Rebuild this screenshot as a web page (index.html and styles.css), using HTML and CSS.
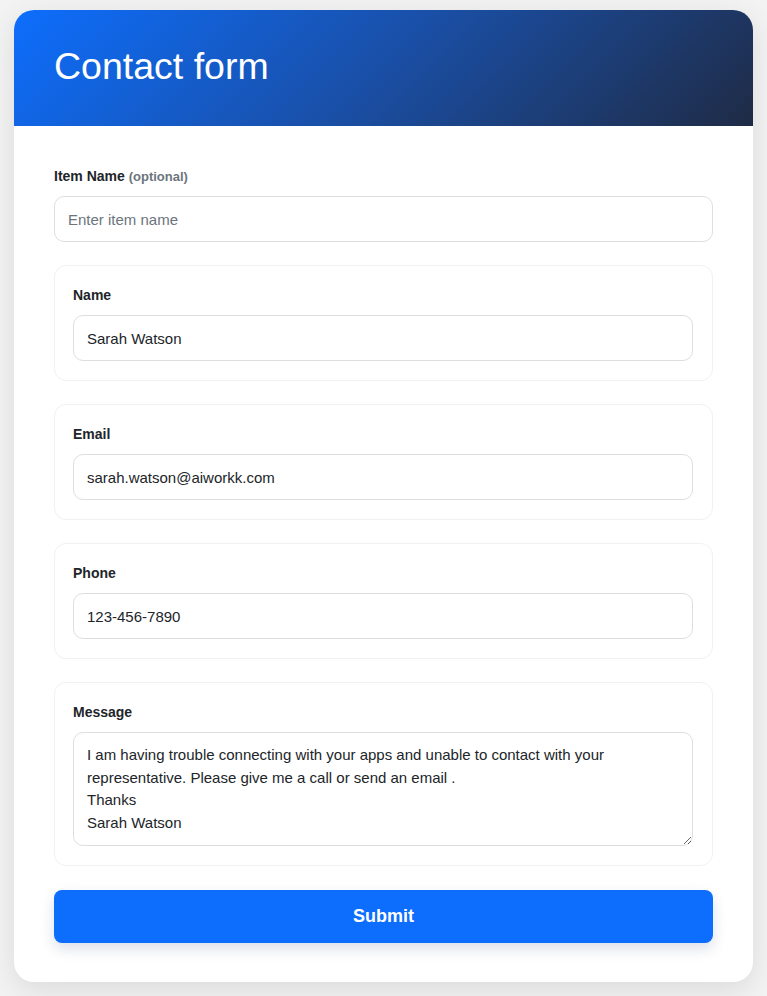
FILE: index.html
```html
<!DOCTYPE html>
<html lang="en">
<head>
  <meta charset="UTF-8">
  <title>Contact form</title>
  <link rel="stylesheet" href="styles.css">
</head>
<body>
  <div class="form-card">
    <div class="form-header">
      <h1>Contact form</h1>
    </div>
    <form class="form-body">
      <div class="field">
        <label for="itemName">Item Name <small>(optional)</small></label>
        <input id="itemName" type="text" placeholder="Enter item name">
      </div>

      <div class="field-box">
        <label for="name">Name</label>
        <input id="name" type="text" value="Sarah Watson">
      </div>

      <div class="field-box">
        <label for="email">Email</label>
        <input id="email" type="email" value="sarah.watson@aiworkk.com">
      </div>

      <div class="field-box">
        <label for="phone">Phone</label>
        <input id="phone" type="tel" value="123-456-7890">
      </div>

      <div class="field-box">
        <label for="message">Message</label>
        <textarea id="message">I am having trouble connecting with your apps and unable to contact with your representative. Please give me a call or send an email .
Thanks
Sarah Watson</textarea>
      </div>

      <button type="button" class="submit-button">Submit</button>
    </form>
  </div>
</body>
</html>
```

FILE: styles.css
```css
body {
  margin: 0;
  padding: 10px 14px 15px;
  font-family: "Liberation Sans", Arial, sans-serif;
  background-color: #f3f3f3;
  color: #212529;
}

.form-card {
  background: #fff;
  border-radius: 20px;
  overflow: hidden;
  box-shadow: 0 8px 30px rgba(0, 0, 0, 0.1);
}

.form-header {
  height: 116px;
  box-sizing: border-box;
  padding: 0 40px;
  display: flex;
  align-items: center;
  background: linear-gradient(135deg, #0d6efd 0%, #1a4fa6 50%, #1f2b45 100%);
}

.form-header h1 {
  margin: 0 0 4px;
  color: #fff;
  font-size: 37.5px;
  font-weight: 400;
}

.form-body {
  padding: 40px 40px 39px;
  display: flex;
  flex-direction: column;
  gap: 23px;
}

label {
  display: block;
  margin-bottom: 10px;
  font-size: 14px;
  font-weight: bold;
  line-height: 20px;
  color: #212529;
}

.field label {
  margin-bottom: 9px;
}

label small {
  font-size: 13px;
  color: #6c757d;
}

.field-box {
  border: 1px solid #f1f1f1;
  border-radius: 12px;
  padding: 19px 19px 19px 18px;
}

input,
textarea {
  display: block;
  width: 100%;
  box-sizing: border-box;
  border: 1px solid #dedede;
  border-radius: 10px;
  font-family: "Liberation Sans", Arial, sans-serif;
  font-size: 15px;
  color: #212529;
  background: #fff;
}

input {
  height: 46px;
  padding: 0 13px;
}

input::placeholder {
  color: #6c757d;
}

textarea {
  height: 114px;
  padding: 11px 13px 10px;
  line-height: 22.5px;
  resize: vertical;
}

.submit-button {
  margin-top: 1px;
  height: 53px;
  border: none;
  border-radius: 8px;
  background: #0d6efd;
  color: #fff;
  font-family: "Liberation Sans", Arial, sans-serif;
  font-size: 18px;
  font-weight: bold;
  cursor: pointer;
  box-shadow: 0 6px 14px rgba(13, 50, 110, 0.15);
}
```
